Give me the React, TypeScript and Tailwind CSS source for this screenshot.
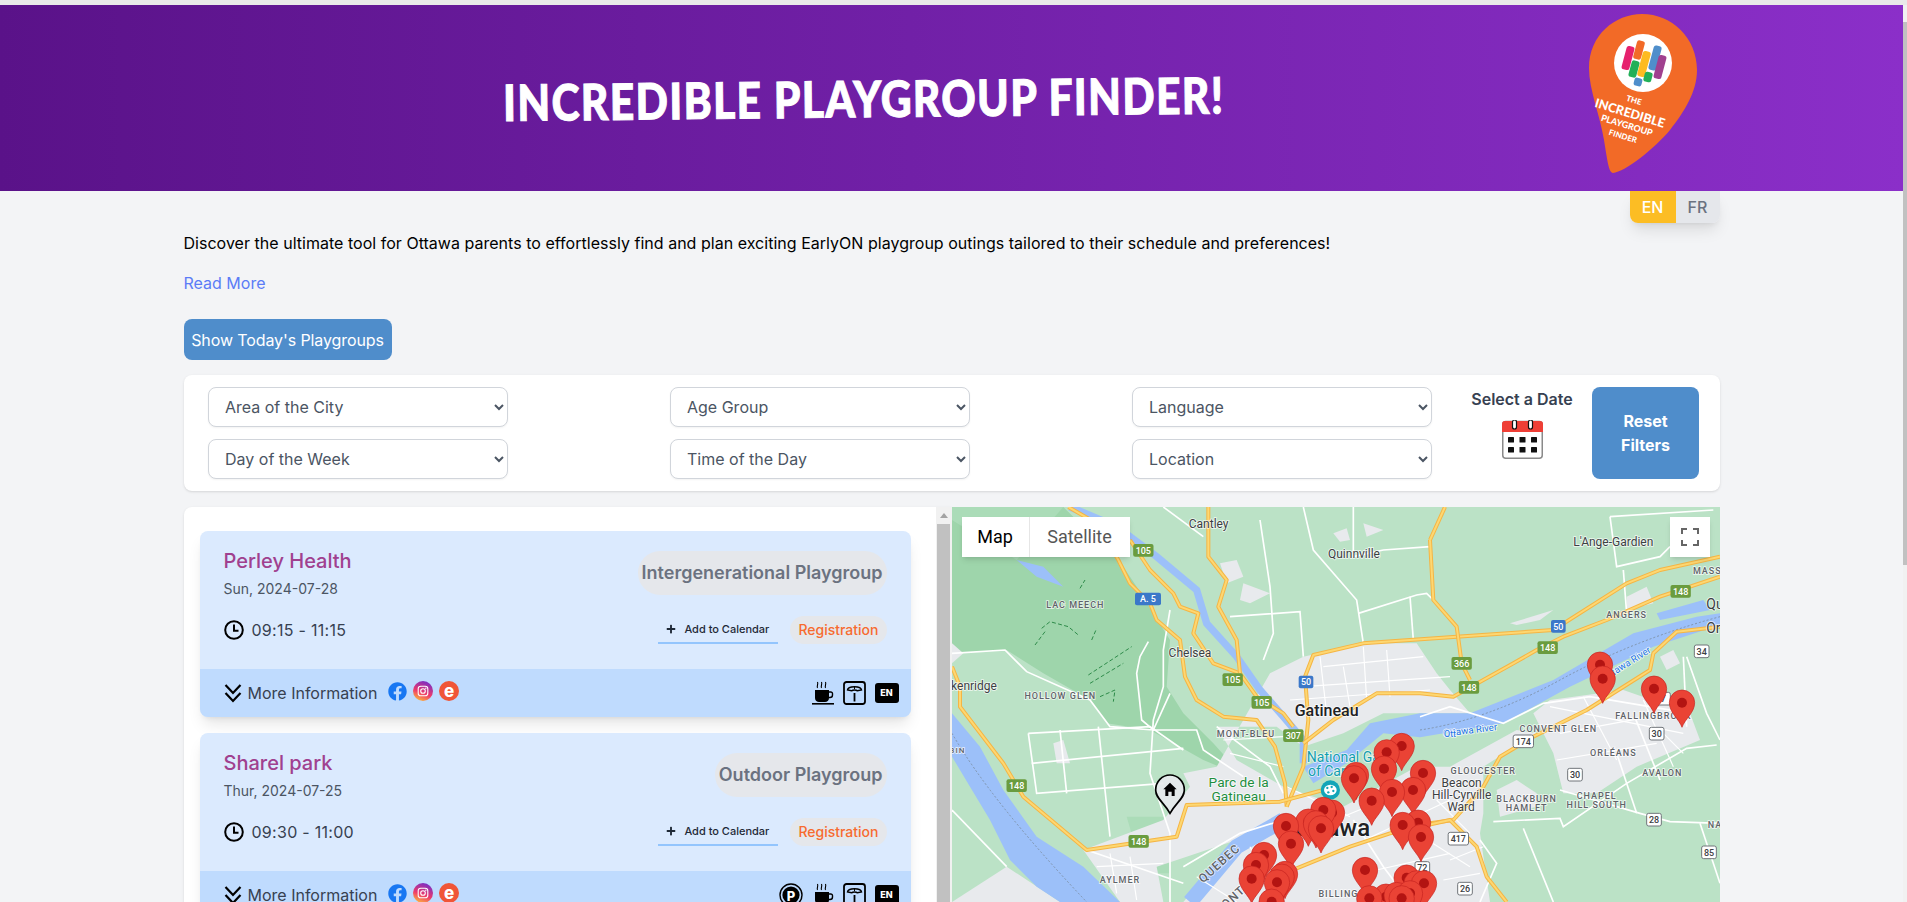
import React from "react";
import { FaFacebook, FaPlus } from "react-icons/fa";

const X = 1410;

const parkPts = "6,21 340,21 420,100 500,170 560,260 610,340 660,420 650,560 700,640 790,730 880,830 760,780 600,690 470,670 420,600 280,520 170,450 6,460";
const urban = [
  "960,520 1060,470 1240,430 1400,430 1460,520 1500,570 1560,640 1300,640 1180,700 1060,740 980,680 800,680 860,780 1000,860 1180,920 1400,800 1500,800 1700,690 1760,700 1600,800 1600,940 1590,1000 1620,1206 700,1206 860,1020 620,1100 640,1206 510,1206 400,1050 640,960 720,860 700,820 800,800",
  "1750,640 1800,600 2020,570 2220,640 2250,720 2060,800 1940,880 1840,880 1810,760",
  "170,1100 330,1206 6,1206",
  "1640,870 1700,840 1760,880 1760,920 1650,950",
  "1150,100 1190,85 1200,120 1170,125", "1240,70 1300,90 1250,110", "810,190 860,180 880,230 830,250", "880,250 960,280 900,310 870,300",
  "1680,370 1810,330 1770,360 1700,375", "2030,290 2090,260 2110,310 2030,330", "2130,470 2170,450 2190,490 2150,510", "6,430 40,460 6,490",
  "310,730 340,720 360,790 320,790", "805,920 860,915 860,960 810,960",
];
const majorRoads = [
  "355,21 440,70 505,180 540,250 600,310 620,360 690,420 705,530 740,600 820,650 920,660 975,740 1005,850 1010,920",
  "540,120 600,210 670,280 690,320 745,340 730,400 790,490 870,520 920,590 1000,640 1030,680",
  "775,21 775,170 830,240 805,320 860,420 870,520",
  "2310,170 2130,210 2030,250 1810,390 1520,410 1240,430 1090,465 1065,530 1075,660 1060,800 1010,920",
  "6,500 30,560 30,620 160,790 220,890 410,1050 680,1010 710,915 990,905 1120,870",
  "1060,730 1150,660 1280,580 1410,580 1510,590 1690,490 1760,450 1840,410 1970,360 2130,290 2310,230",
  "1440,120 1450,300 1520,380 1535,490 1560,540",
  "1485,21 1440,120",
  "2310,380 2180,395 2110,460 2100,510 1910,630 1750,710 1650,770 1600,860 1510,960 1440,970 1320,990",
  "1040,1105 1200,1040 1320,1000 1500,960 1580,1040 1610,1130 1670,1206",
];
const whiteRoads = [
  "235,700 600,680 700,750", "235,700 260,880 640,850", "330,690 350,880", "445,680 465,870 480,1010", "245,790 700,745",
  "6,460 165,450 230,515 420,600 480,680 610,690 740,690 760,750 880,830",
  "595,425 570,470 560,520 575,660 610,690 660,580", "660,330 640,450 640,560 610,660 600,820 660,1000 660,1206",
  "1060,21 1090,150 1220,300 1240,430", "1225,340 1400,285 1430,280 1480,330", "1380,290 1390,420",
  "930,60 960,260 970,400 940,480", "840,350 1050,335 1060,470", "800,680 960,800 1000,880",
  "410,1050 700,1150", "700,1100 870,1000 1000,960", "640,21 760,110", "6,930 170,1100", "1210,21 1210,170 1300,150 1440,140",
  "1980,50 2290,30", "1980,50 2000,200 2130,170 2160,140", "2020,210 2030,340", "2210,470 2270,640 2310,720", "2210,680 2200,470",
  "2000,760 2060,940", "2050,640 2130,840", "1720,985 1810,1206", "1630,965 1830,955 1840,980 2030,850 2210,745 2300,735",
  "1830,870 2070,940 2160,965 2310,970", "2250,970 2310,1150", "1410,650 1500,620 1660,670 1780,610 1920,590 2220,640",
  "1590,1020 1640,1090 1590,1206", "1210,960 1300,1100 1380,1206",
];
const streets = [
  "1110,470 1130,640", "1180,500 1200,620", "1240,440 1250,600", "1310,450 1320,590", "1060,560 1500,530", "1020,600 1440,570", "1120,500 1420,470",
  "820,720 1000,710", "840,760 1000,800", "1010,860 1200,950", "1060,1000 1300,900", "1180,1050 1500,900", "1400,1000 1560,1100", "1460,900 1560,1000",
  "1280,1110 1500,1060", "1800,620 2200,700", "1900,590 2000,780", "2080,600 2170,800", "1830,700 2100,650", "1820,780 2120,730", "2140,700 2200,760",
  "480,1060 500,1180", "540,1070 560,1200", "440,1100 640,1090", "1500,1080 1600,1040", "1480,1140 1590,1120", "740,1130 860,1206", "900,1040 980,1206",
];
const trails = ["275,385 300,365 355,380 385,405", "255,435 285,395", "425,420 440,385", "415,525 545,440", "420,550 520,490", "390,265 405,240", "450,590 495,570 490,605"];

const labels: [string, number, number, number, string, number?, number?, number?][] = [
  ["Cantley", 776, 72, 36, "#3c4043"], ["Quinnville", 1212, 162, 36, "#3c4043"], ["L'Ange-Gardien", X + 580, 126, 36, "#3c4043"],
  ["LAC MEECH", 376, 315, 27, "#5f6368", 3, 500], ["HOLLOW GLEN", 331, 588, 27, "#5f6368", 3, 500], ["kenridge", 72, 558, 36, "#3c4043"],
  ["Chelsea", 720, 459, 36, "#3c4043"], ["Gatineau", 1130, 631, 48, "#202124", 0, 500], ["MONT-BLEU", 888, 702, 27, "#5f6368", 3, 500],
  ["National Ga", 1180, 771, 42, "#129eaf"], ["of Can", 1135, 813, 42, "#129eaf"], ["Parc de la", 866, 847, 41, "#1e8e3e"], ["Gatineau", 866, 889, 41, "#1e8e3e"],
  ["Ottawa", 1146, 985, 72, "#202124", 0, 500], ["AYLMER", 510, 1140, 27, "#5f6368", 3, 500], ["QUEBEC", 808, 1090, 36, "#5f6368", 3, 500, -42], ["ONT", 850, 1192, 36, "#5f6368", 3, 500, -42],
  ["BILLINGS", 1175, 1182, 27, "#5f6368", 3, 500], ["Beacon", X + 125, 850, 36, "#3c4043"], ["Hill-Cyrville", X + 125, 885, 36, "#3c4043"], ["Ward", X + 123, 921, 36, "#3c4043"],
  ["GLOUCESTER", X + 190, 813, 27, "#5f6368", 3, 500], ["BLACKBURN", X + 320, 897, 27, "#5f6368", 3, 500], ["HAMLET", X + 320, 925, 27, "#5f6368", 3, 500],
  ["CHAPEL", X + 530, 888, 27, "#5f6368", 3, 500], ["HILL SOUTH", X + 530, 915, 27, "#5f6368", 3, 500], ["CONVENT GLEN", X + 415, 687, 27, "#5f6368", 3, 500],
  ["ORLÉANS", X + 580, 759, 27, "#5f6368", 3, 500], ["AVALON", X + 727, 819, 27, "#5f6368", 3, 500], ["FALLINGBROOK", X + 700, 648, 27, "#5f6368", 3, 500],
  ["ANGERS", X + 620, 345, 27, "#5f6368", 3, 500], ["MASS", X + 862, 212, 27, "#5f6368", 3, 500], ["Ottawa River", X + 150, 690, 29, "#1a73e8", 0, 400, -7],
  ["Ottawa River", X + 620, 490, 29, "#1a73e8", 0, 400, -32], ["Qu", X + 885, 312, 42, "#3c4043"], ["Or", X + 880, 385, 42, "#3c4043"], ["NA", X + 885, 975, 27, "#5f6368", 3, 500],
  ["BIN", 22, 750, 24, "#5f6368", 3, 500], ["Ott", 1500, 702, 27, "#1a73e8"],
];

const shields: [string, number, number, string][] = [
  ["105", 580, 152, "g"], ["A. 5", 594, 298, "b"], ["50", 1068, 547, "b"], ["50", X + 415, 380, "b"], ["105", 848, 540, "g"], ["105", 935, 608, "g"], ["307", 1030, 708, "g"],
  ["148", 200, 858, "g"], ["148", 566, 1025, "g"], ["148", X + 782, 275, "g"], ["148", X + 383, 444, "g"], ["366", X + 125, 491, "g"], ["148", X + 147, 563, "g"],
  ["174", X + 310, 725, "w"], ["30", X + 710, 702, "w"], ["30", X + 465, 825, "w"], ["28", X + 702, 960, "w"], ["34", X + 845, 455, "w"], ["417", X + 115, 1017, "w"],
  ["26", X + 135, 1167, "w"], ["85", X + 867, 1058, "w"], ["72", 1417, 1105, "w"], ["7", X + 730, 597, "w"],
];

const pins: [number, number][] = [
  [1355, 738], [1310, 757], [1302, 806], [1218, 825], [1212, 835], [1419, 819], [1389, 870], [1326, 876], [1265, 902],
  [1146, 938], [1120, 930], [1075, 965], [1098, 970], [1113, 985], [1008, 978], [1023, 1031], [942, 1065], [918, 1095], [905, 1136],
  [1005, 1122], [995, 1130], [981, 1147], [965, 1205], [1404, 968], [1358, 975], [1413, 1011], [1245, 1110], [1370, 1133], [1400, 1150], [1422, 1150],
  [1308, 1190], [1258, 1195], [1340, 1185], [1380, 1180], [1355, 1195], [X + 540, 494], [X + 548, 536], [X + 702, 566], [X + 786, 608],
];

function MapArt() {
  return (
    <svg viewBox="6 21 2304 1185" className="block w-full h-full font-[Roboto,sans-serif]">
      <rect x="6" y="21" width="2304" height="1185" fill="#bbe2c6" />
      <polygon points={parkPts} fill="#9ed5ab" />
      <polygon points="530,950 640,950 660,1120 580,1120" fill="#abdcb8" />
      <polygon points="6,21 340,21 200,180 6,60" fill="#abdcb8" />
      {urban.map((p, i) => <polygon key={i} points={p} fill="#e8eaed" />)}
      <polygon points="6,640 90,740 160,870 260,1010 400,1100 510,1206 330,1206 260,1160 180,1080 120,960 60,860 6,770" fill="#9cc0f9" />
      <path d="M720 1206 L860 1040 L1000 960" fill="none" stroke="#9cc0f9" strokeWidth="46" />
      <polyline points="360,21 500,80 620,170 740,270 770,370 860,470 930,570 1000,650 1060,720 1060,790" fill="none" stroke="#9cc0f9" strokeWidth="22" />
      <polygon points="1060,800 1190,750 1260,670 1410,640 1560,640 1810,540 2050,400 2240,350 2310,340 2310,375 2110,440 1860,560 1660,670 1410,712 1300,700 1190,790 1090,850" fill="#9cc0f9" />
      <polygon points="2120,340 2260,300 2280,330 2130,360" fill="#9cc0f9" />
      <polygon points="200,180 260,230 340,260 280,200" fill="#9cc0f9" />
      <path d="M6 700 Q120 900 410 1206 M1410 690 Q1610 660 1830 540 T2310 350" fill="none" stroke="#7a8a9c" strokeWidth="2.5" strokeDasharray="6 6" />
      {trails.map((p, i) => <polyline key={i} points={p} fill="none" stroke="#2e8b4a" strokeWidth="3" strokeDasharray="12 7" />)}
      {whiteRoads.map((p, i) => <polyline key={i} points={p} fill="none" stroke="#ffffff" strokeWidth="5" />)}
      {streets.map((p, i) => <polyline key={i} points={p} fill="none" stroke="#ffffff" strokeWidth="3.5" />)}
      {majorRoads.map((p, i) => (
        <g key={i} fill="none" strokeLinejoin="round">
          <polyline points={p} stroke="#f5b544" strokeWidth="12" />
          <polyline points={p} stroke="#fdd772" strokeWidth="6" />
        </g>
      ))}
      {labels.map(([t, x, y, s, c, ls, w, r], i) => (
        <text key={i} x={x} y={y} fontSize={s} fill={c} letterSpacing={ls ?? 0} fontWeight={w ?? 400} textAnchor="middle" dominantBaseline="central"
          stroke="#ffffff" strokeWidth="5" strokeOpacity="0.75" paintOrder="stroke"
          transform={r ? `rotate(${r} ${x} ${y})` : undefined}>{t}</text>
      ))}
      {shields.map(([t, x, y, k], i) => {
        const w = Math.max(42, t.length * 17 + 10);
        return (
          <g key={i}>
            <rect x={x - w / 2} y={y - 20} width={w} height={38} rx="6" fill={k === "g" ? "#6a9c3f" : k === "b" ? "#3b78c9" : "#ffffff"} stroke={k === "w" ? "#70757a" : "none"} strokeWidth="3" />
            <text x={x} y={y} fontSize="27" fontWeight="500" fill={k === "w" ? "#3c4043" : "#ffffff"} textAnchor="middle" dominantBaseline="central">{t}</text>
          </g>
        );
      })}
      <circle cx="1141" cy="870" r="29" fill="#12a5b8" />
      <ellipse cx="1141" cy="870" rx="19" ry="16" fill="#ffffff" />
      <circle cx="1132" cy="864" r="3.5" fill="#12a5b8" /><circle cx="1145" cy="861" r="3.5" fill="#12a5b8" /><circle cx="1150" cy="873" r="3.5" fill="#12a5b8" /><circle cx="1135" cy="877" r="3.5" fill="#12a5b8" />
      <path d="M660 940 C640 905 617 895 617 870 A43 45 0 0 1 703 870 C703 895 680 905 660 940 Z" fill="#e8eaed" fillOpacity="0.9" stroke="#000000" strokeWidth="5" />
      <path d="M660 848 L680 868 H674 V888 H665 V875 H655 V888 H646 V868 H640 Z" fill="#000000" />
      {pins.map(([x, y], i) => (
        <g key={i}>
          <path d={`M${x} ${y + 74} C${x - 8} ${y + 50} ${x - 38} ${y + 30} ${x - 38} ${y} A38 38 0 0 1 ${x + 38} ${y} C${x + 38} ${y + 30} ${x + 8} ${y + 50} ${x} ${y + 74} Z`} fill="#ea4335" stroke="#c5221f" strokeWidth="2" />
          <circle cx={x} cy={y} r="15" fill="#b31412" />
        </g>
      ))}
    </svg>
  );
}

function Logo() {
  const bars: [number, number, number, string][] = [
    [1628, 58, 24, "#e6216e"], [1639, 50, 19, "#f26a27"], [1634, 69, 17, "#22b058"], [1644, 64, 26, "#fdbb21"], [1655, 58, 25, "#4f8ecb"], [1660, 67, 24, "#a0408f"], [1648, 77, 10, "#22b058"], [1638, 82, 8, "#4f8ecb"],
  ];
  const lines: [string, number, number, number][] = [["THE", 1634, 100, 8], ["INCREDIBLE", 1630, 113, 12.5], ["PLAYGROUP", 1627, 125, 9], ["FINDER", 1623, 136, 8]];
  return (
    <svg viewBox="1585 13 120 170" className="w-[120px] h-[170px] shrink-0 font-[Lato,sans-serif]">
      <path d="M1613 173 C1609 172 1608 165 1604 140 C1600 115 1589 90 1589 68 C1589 35 1615 14 1642 14 C1672 14 1697 38 1697 70 C1697 92 1684 112 1670 130 C1655 148 1625 172 1613 173 Z" fill="#f26a27" />
      <circle cx="1643" cy="63" r="29" fill="#ffffff" />
      {bars.map(([x, y, h, c], i) => (
        <rect key={i} x={x - 4} y={y - h / 2} width="8" height={h} rx="2.5" fill={c} transform={`rotate(15 ${x} ${y})`} />
      ))}
      {lines.map(([t, x, y, s]) => (
        <text key={t} x={x} y={y} fontSize={s} fontWeight="900" fill="#ffffff" textAnchor="middle" dominantBaseline="central" transform={`rotate(17 ${x} ${y})`}>{t}</text>
      ))}
    </svg>
  );
}

function Calendar() {
  return (
    <svg viewBox="0 0 41 39" className="w-[41px] h-[39px]">
      <rect x="0.75" y="1.5" width="39.5" height="36.75" rx="3" fill="#ffffff" stroke="#8a8a8a" strokeWidth="1.5" />
      <path d="M0 12 V4 A3 3 0 0 1 3 1 H38 A3 3 0 0 1 41 4 V12 Z" fill="#ef3f36" />
      <rect x="10.5" y="0" width="4" height="9" rx="2" fill="#ffffff" stroke="#111111" strokeWidth="1.2" />
      <rect x="26.5" y="0" width="4" height="9" rx="2" fill="#ffffff" stroke="#111111" strokeWidth="1.2" />
      {[17, 27].map((y) => [6, 17.5, 29].map((x) => <rect key={`${x}-${y}`} x={x} y={y} width="6" height="5.5" rx="0.6" fill="#111111" />))}
    </svg>
  );
}

function Clock() {
  return (
    <svg viewBox="0 0 20 20" className="w-5 h-5 shrink-0">
      <circle cx="10" cy="10" r="8.8" fill="none" stroke="#000000" strokeWidth="2" />
      <path d="M10 4.5 V10.8 H14.5" fill="none" stroke="#000000" strokeWidth="2" />
    </svg>
  );
}

function Chevrons() {
  return (
    <svg viewBox="0 0 18 20" className="w-[18px] h-5 shrink-0">
      <path d="M1.5 2 L9 10 L16.5 2 M1.5 10 L9 18 L16.5 10" fill="none" stroke="#000000" strokeWidth="2.2" />
    </svg>
  );
}

function Instagram() {
  return (
    <svg viewBox="0 0 20 20" className="w-5 h-5">
      <defs>
        <linearGradient id="ig" x1="0.2" y1="1" x2="0.6" y2="0">
          <stop offset="0" stopColor="#fdc13a" />
          <stop offset="0.45" stopColor="#ee3a6a" />
          <stop offset="1" stopColor="#7b2fc4" />
        </linearGradient>
      </defs>
      <circle cx="10" cy="10" r="10" fill="url(#ig)" />
      <rect x="5.2" y="5.2" width="9.6" height="9.6" rx="2.6" fill="none" stroke="#ffffff" strokeWidth="1.1" />
      <circle cx="10" cy="10" r="2.3" fill="none" stroke="#ffffff" strokeWidth="1.1" />
      <circle cx="12.8" cy="7.2" r="0.7" fill="#ffffff" />
    </svg>
  );
}

function Eventbrite() {
  return (
    <svg viewBox="0 0 20 20" className="w-5 h-5">
      <circle cx="10" cy="10" r="10" fill="#f05537" />
      <text x="10" y="9.5" fontSize="17" fontWeight="800" fill="#ffffff" textAnchor="middle" dominantBaseline="central">e</text>
    </svg>
  );
}

function Coffee() {
  return (
    <svg viewBox="0 0 24 24" className="w-6 h-6">
      <path d="M6.5 7 C5.5 5 7.5 3.5 6.5 1 M10.5 7 C9.5 5 11.5 3.5 10.5 1 M14.5 7 C13.5 5 15.5 3.5 14.5 1" fill="none" stroke="#000000" strokeWidth="1.1" />
      <path d="M4 9 H18 V17 C18 19.5 16 21 14 21 H8 C6 21 4 19.5 4 17 Z" fill="#000000" />
      <path d="M18 11 H20 A1.6 1.6 0 0 1 21.5 12.6 V14 A2.5 2.5 0 0 1 19 16.5 H17.5" fill="none" stroke="#000000" strokeWidth="1.4" />
      <rect x="1" y="22" width="22" height="1.6" fill="#000000" />
    </svg>
  );
}

function ScaleIcon() {
  return (
    <svg viewBox="0 0 23 24" className="w-[23px] h-6">
      <rect x="1" y="1" width="21" height="22" rx="2.5" fill="none" stroke="#000000" strokeWidth="1.8" />
      <path d="M4.5 9 C5 4.5 18 4.5 18.5 9 L14.5 9.8 C13 8.6 10 8.6 8.5 9.8 Z" fill="none" stroke="#000000" strokeWidth="1.5" />
      <path d="M11.5 6 V8" stroke="#000000" strokeWidth="1" />
      <rect x="10.6" y="12" width="1.8" height="8.5" fill="#000000" />
    </svg>
  );
}

function Parking() {
  return (
    <svg viewBox="0 0 24 24" className="w-6 h-6">
      <circle cx="12" cy="12" r="11" fill="none" stroke="#000000" strokeWidth="1.4" />
      <circle cx="12" cy="12" r="8.6" fill="#000000" />
      <text x="12" y="12.5" fontSize="13" fontWeight="800" fill="#ffffff" textAnchor="middle" dominantBaseline="central">P</text>
    </svg>
  );
}

function Card({ title, date, time, badge, parking }: { title: string; date: string; time: string; badge: string; parking?: boolean }) {
  return (
    <div className="w-[711px] shrink-0 rounded-lg bg-[#dbeafe] shadow-lg overflow-hidden">
      <div className="h-[138px] pl-6 pr-6 pt-4">
        <div className="h-[69px] flex justify-between items-start">
          <div>
            <div className="text-xl leading-7 font-medium text-[#a0408f]">{title}</div>
            <div className="mt-1 text-sm leading-5 text-[#4b5563]">{date}</div>
          </div>
          <div className="mt-1 h-11 px-1 rounded-3xl bg-[#e5e7eb] flex items-center text-lg font-semibold text-[#6b7280]">{badge}</div>
        </div>
        <div className="h-7 flex justify-between items-center">
          <div className="flex items-center gap-2 text-[#374151]"><Clock /><span className="tracking-[0.28px]">{time}</span></div>
          <div className="flex items-center gap-3">
            <div className="h-7 w-[120px] pl-[8px] flex items-center gap-2 border-b-2 border-[#93c5fd] text-[11px] font-medium text-[#1f2937]">
              <FaPlus className="w-[10px] h-[10px]" /><span>Add to Calendar</span>
            </div>
            <div className="h-7 px-2 rounded-2xl bg-[#e5e7eb] flex items-center text-sm font-medium text-[#f76b2f]">Registration</div>
          </div>
        </div>
      </div>
      <div className="h-12 pl-6 pr-3 bg-[#bfdbfe] flex items-center justify-between">
        <div className="flex items-center">
          <Chevrons />
          <span className="ml-[6px] text-[#374151]">More Information</span>
          <div className="ml-[11px] mb-1 flex items-center gap-[6px]">
            <FaFacebook className="w-[19px] h-[19px] text-[#1877f2]" />
            <Instagram />
            <Eventbrite />
          </div>
        </div>
        <div className="flex items-center">
          {parking && <div className="mr-2"><Parking /></div>}
          <Coffee />
          <div className="ml-2"><ScaleIcon /></div>
          <div className="ml-[9px] w-6 h-5 rounded-[3px] bg-black text-white text-[9px] font-extrabold flex items-center justify-center">EN</div>
        </div>
      </div>
    </div>
  );
}

function Filter({ label }: { label: string }) {
  return (
    <select className="w-[300px] h-10 pl-3 pr-1 rounded-lg border border-[#d1d5db] bg-white text-[#4b5563] shadow-xs">
      <option>{label}</option>
    </select>
  );
}

export default function App() {
  return (
    <div className="h-[902px] overflow-hidden bg-[#f3f4f6] text-black font-[Inter,sans-serif]">
      <div className="h-[5px] bg-[#e9e9e9]" />
      <div className="h-[897px] flex">
        <div className="w-[1903px] shrink-0">
          <header className="h-[186px] flex items-center justify-between bg-linear-to-r from-[#5a1289] to-[#8b2fc9]">
            <h1 className="pl-[503px] pt-[7px] text-[50px] leading-none font-black tracking-[1.6px] uppercase text-white font-[Lato,sans-serif] [-webkit-text-stroke:1px_white] whitespace-nowrap">
              <span className="inline-block origin-left scale-x-[0.85] -rotate-[0.6deg]">Incredible Playgroup Finder!</span>
            </h1>
            <div className="mr-[198px]"><Logo /></div>
          </header>
          <main className="w-[1536px] mx-auto">
            <div className="flex justify-end">
              <div className="flex h-8 rounded-b-lg shadow-lg">
                <div className="w-[46px] rounded-bl-lg bg-[#fcbd24] text-white font-medium flex items-center justify-center">EN</div>
                <div className="w-[44px] rounded-br-lg bg-[#e5e7eb] text-[#6b7280] font-medium flex items-center justify-center">FR</div>
              </div>
            </div>
            <p className="mt-2 leading-6 tracking-[0.024px]">Discover the ultimate tool for Ottawa parents to effortlessly find and plan exciting EarlyON playgroup outings tailored to their schedule and preferences!</p>
            <div className="mt-4 leading-6 text-[#5b7cf6]">Read More</div>
            <button className="mt-6 block h-[41px] w-[208px] rounded-lg bg-[#4f8dcb] text-white tracking-[-0.1px]">Show Today's Playgroups</button>
            <section className="mt-[15px] h-[116px] rounded-lg bg-white shadow-sm flex items-center pl-[24.5px] pr-[20.5px]">
              <div className="w-[1224px] grid grid-cols-[300px_300px_300px] justify-between gap-y-3">
                {["Area of the City", "Age Group", "Language", "Day of the Week", "Time of the Day", "Location"].map((l) => <Filter key={l} label={l} />)}
              </div>
              <div className="ml-[30px] w-[120px] h-[92px] flex flex-col items-center">
                <div className="h-6 font-semibold text-[#374151]">Select a Date</div>
                <div className="mt-[9px]"><Calendar /></div>
              </div>
              <button className="ml-[10px] w-[107px] h-[92px] rounded-lg bg-[#4f8dcb] text-white font-bold leading-6">Reset<br />Filters</button>
            </section>
            <section className="mt-4 h-[395px] grid grid-cols-2">
              <div className="rounded-tl-lg bg-white shadow-sm flex overflow-hidden">
                <div className="flex-1 pl-4 pt-6 flex flex-col gap-4 overflow-hidden">
                  <Card title="Perley Health" date="Sun, 2024-07-28" time="09:15 - 11:15" badge="Intergenerational Playgroup" />
                  <Card title="Sharel park" date="Thur, 2024-07-25" time="09:30 - 11:00" badge="Outdoor Playgroup" parking />
                </div>
                <div className="w-4 bg-[#f1f1f1] flex flex-col items-center">
                  <div className="h-[17px] flex items-center justify-center">
                    <div className="w-0 h-0 border-x-4 border-x-transparent border-b-[5px] border-b-[#a3a3a3]" />
                  </div>
                  <div className="w-[13px] flex-1 bg-[#c1c1c1]" />
                </div>
              </div>
              <div className="relative overflow-hidden">
                <MapArt />
                <div className="absolute left-[10px] top-[10px] h-10 flex bg-white shadow-md text-lg font-[Roboto,sans-serif]">
                  <div className="w-[68px] flex items-center justify-center text-black border-r border-[#e6e6e6]">Map</div>
                  <div className="w-[100px] flex items-center justify-center text-[#565656]">Satellite</div>
                </div>
                <div className="absolute right-[10px] top-[10px] w-10 h-10 bg-white shadow-md flex items-center justify-center">
                  <svg viewBox="0 0 18 18" className="w-[18px] h-[18px]">
                    <path d="M0 6 V0 H6 V2 H2 V6 Z M12 0 H18 V6 H16 V2 H12 Z M0 12 H2 V16 H6 V18 H0 Z M16 12 H18 V18 H12 V16 H16 Z" fill="#666666" />
                  </svg>
                </div>
              </div>
            </section>
          </main>
        </div>
        <div className="w-1 bg-[#f1f1f1] pt-[17px]">
          <div className="h-[543px] bg-[#c1c1c1]" />
        </div>
      </div>
    </div>
  );
}
